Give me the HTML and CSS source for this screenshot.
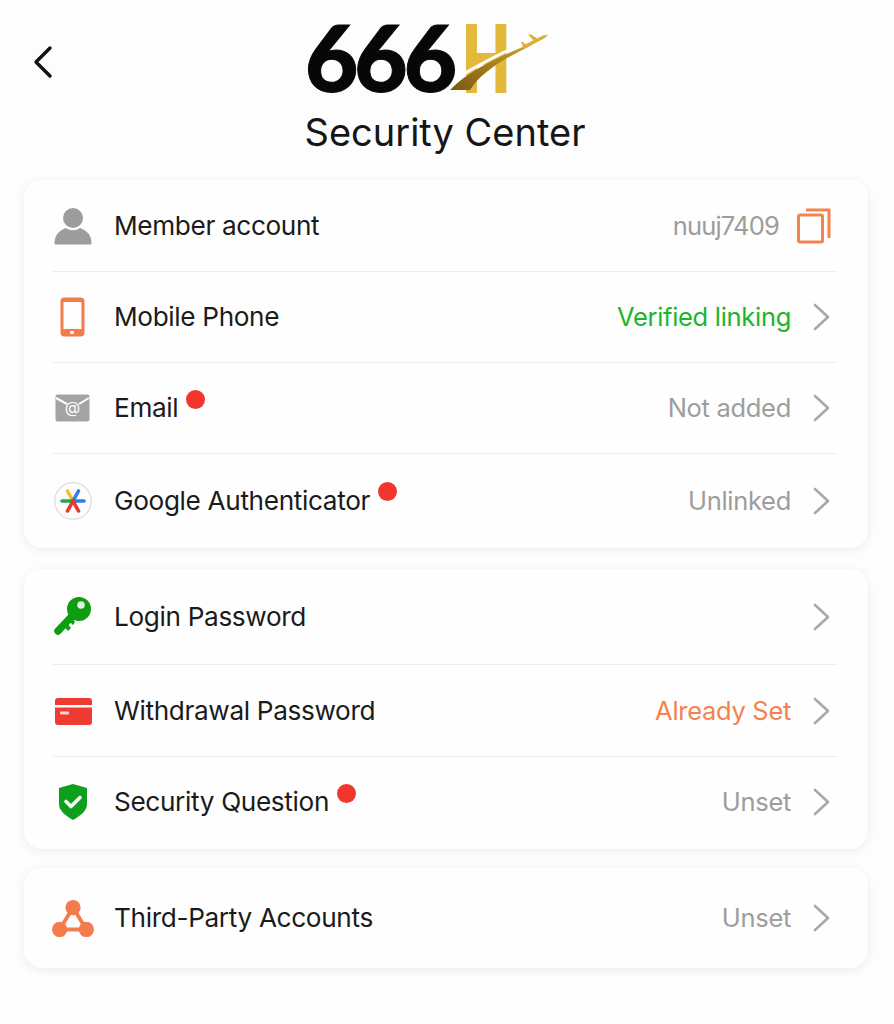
FILE: index.html
```html
<!DOCTYPE html>
<html lang="en">
  <head>
    <meta charset="UTF-8" />
    <meta name="viewport" content="width=device-width, initial-scale=1.0" />
    <title>Security Center</title>
    <link rel="stylesheet" href="styles.css">
  </head>
  <body>
    <header class="header">
      <div class="topbar">
        <svg class="back" width="22" height="34" viewBox="0 0 22 34"><path d="M18 3 L4 17 L18 31" fill="none" stroke="#111" stroke-width="3.4" stroke-linecap="round" stroke-linejoin="round"/></svg>
        <div class="logo">
          <span class="logo-num">666</span><span class="logo-h">H</span>
          <svg class="logo-plane" width="110" height="70" viewBox="0 0 110 70">
            <defs>
              <linearGradient id="swoosh" x1="0" y1="1" x2="1" y2="0">
                <stop offset="0" stop-color="#7a5a12"/>
                <stop offset="0.45" stop-color="#a67f1e"/>
                <stop offset="1" stop-color="#dcb038"/>
              </linearGradient>
            </defs>
            <path d="M14 53 C35 39 58 29 80 18" fill="none" stroke="#fdfdfd" stroke-width="3"/>
            <path d="M5 66 C20 50 45 37 66 28 C80 22 92 17 103 11 C90 20 75 27 62 34 C47 43 34 52 25 66 Z" fill="url(#swoosh)"/>
            <path d="M77 22 L98 11.500 L103 10.500 L100 14 L80 24 Z M83 10.500 L86 10.500 L93 15 L89 17 Z M76 18 L78 18 L83 23 L79 25 Z" fill="#dcb038"/>
          </svg>
        </div>
      </div>
      <h1 class="title">Security Center</h1>
    </header>

    <main class="list">
      <section class="card">
        <div class="row row-first">
          <div class="icon">
            <svg width="38" height="38" viewBox="0 0 38 38"><circle cx="19" cy="11" r="10" fill="#9c9c9c"/><path d="M1 37 C1 28 5 24 12 21.500 C16 24.500 22 24.500 26 21.500 C33 24 37 28 37 37 Z" fill="#9c9c9c" stroke="#9c9c9c" stroke-linejoin="round"/></svg>
          </div>
          <span class="label">Member account</span>
          <span class="value value-muted value-id">nuuj7409</span>
          <svg class="copy" width="34" height="36" viewBox="0 0 34 36"><rect x="1.500" y="7" width="24" height="27" rx="1.500" fill="none" stroke="#f3834f" stroke-width="3"/><path d="M9 2 H32 V30" fill="none" stroke="#f3834f" stroke-width="3"/></svg>
        </div>
        <div class="row">
          <div class="icon">
            <svg width="26" height="40" viewBox="0 0 26 40"><rect x="0.500" y="0.500" width="24" height="39" rx="4" fill="#f47c4c"/><rect x="3.500" y="5" width="18" height="27" fill="#fdfdfd"/><rect x="10" y="34" width="4" height="3" rx="1" fill="#fdfdfd"/></svg>
          </div>
          <span class="label">Mobile Phone</span>
          <span class="value value-green">Verified linking</span>
          <svg class="arrow" width="18" height="28" viewBox="0 0 18 28"><path d="M2 2 L15 14 L2 26" fill="none" stroke="#a8a8a8" stroke-width="2.600" stroke-linecap="round" stroke-linejoin="round"/></svg>
        </div>
        <div class="row">
          <div class="icon">
            <svg width="36" height="28" viewBox="0 0 36 28"><rect x="0.500" y="0.500" width="34" height="27" rx="2" fill="#a3a3a3"/><path d="M1 4 L12 10 M34 4 L24 10" stroke="#fdfdfd" stroke-width="2" fill="none"/><text x="17.500" y="19" class="icon-at">@</text></svg>
          </div>
          <span class="label">Email</span>
          <span class="dot"></span>
          <span class="value value-muted">Not added</span>
          <svg class="arrow" width="18" height="28" viewBox="0 0 18 28"><path d="M2 2 L15 14 L2 26" fill="none" stroke="#a8a8a8" stroke-width="2.600" stroke-linecap="round" stroke-linejoin="round"/></svg>
        </div>
        <div class="row row-end">
          <div class="icon">
            <svg width="38" height="38" viewBox="0 0 38 38">
              <circle cx="19" cy="19" r="18.300" fill="#fdfdfd" stroke="#dcdcdc" stroke-width="1.200"/>
              <g fill="none" stroke-width="3.600" stroke-linecap="round">
                <path d="M19 19 L13.500 9" stroke="#f5bf2a"/>
                <path d="M19 19 L24.500 9" stroke="#2f80e4"/>
                <path d="M19 19 L30 19" stroke="#2f80e4"/>
                <path d="M19 19 L8 19" stroke="#1fa84f"/>
                <path d="M19 19 L13.500 29" stroke="#e23a33"/>
                <path d="M19 19 L24.500 29" stroke="#e23a33"/>
              </g>
            </svg>
          </div>
          <span class="label">Google Authenticator</span>
          <span class="dot"></span>
          <span class="value value-muted">Unlinked</span>
          <svg class="arrow" width="18" height="28" viewBox="0 0 18 28"><path d="M2 2 L15 14 L2 26" fill="none" stroke="#a8a8a8" stroke-width="2.600" stroke-linecap="round" stroke-linejoin="round"/></svg>
        </div>
      </section>

      <section class="card card-two">
        <div class="row row-tall">
          <div class="icon">
            <svg width="38" height="40" viewBox="0 0 38 40"><path d="M20 17 L4 34" fill="none" stroke="#0d9c12" stroke-width="7.500" stroke-linecap="round"/><path d="M9 28 L14 34 L17 31 L12 25 Z M14 23 L19 28 L21 25 L17 20 Z" fill="#0d9c12"/><circle cx="25" cy="12" r="12" fill="#0d9c12"/><circle cx="27" cy="8" r="3.800" fill="#e4f4e4"/></svg>
          </div>
          <span class="label">Login Password</span>
          <span class="value"></span>
          <svg class="arrow" width="18" height="28" viewBox="0 0 18 28"><path d="M2 2 L15 14 L2 26" fill="none" stroke="#a8a8a8" stroke-width="2.600" stroke-linecap="round" stroke-linejoin="round"/></svg>
        </div>
        <div class="row row-mid">
          <div class="icon">
            <svg width="37" height="27" viewBox="0 0 37 27"><rect width="37" height="27" rx="3" fill="#ee3c32"/><rect y="7" width="37" height="2.500" fill="#fdfdfd"/><rect x="5" y="13.500" width="9" height="3" rx="1" fill="#fbd6d2"/></svg>
          </div>
          <span class="label">Withdrawal Password</span>
          <span class="value value-orange">Already Set</span>
          <svg class="arrow" width="18" height="28" viewBox="0 0 18 28"><path d="M2 2 L15 14 L2 26" fill="none" stroke="#a8a8a8" stroke-width="2.600" stroke-linecap="round" stroke-linejoin="round"/></svg>
        </div>
        <div class="row row-last">
          <div class="icon">
            <svg width="30" height="36" viewBox="0 0 30 36"><path d="M15 0 L29 4 V20 C29 27 22 32 15 36 C8 32 1 27 1 20 V4 Z" fill="#0ea01c"/><path d="M8 17.500 L13 22.500 L22 13.500" fill="none" stroke="#f4fbf4" stroke-width="3.600" stroke-linecap="round" stroke-linejoin="round"/></svg>
          </div>
          <span class="label">Security Question</span>
          <span class="dot"></span>
          <span class="value value-muted">Unset</span>
          <svg class="arrow" width="18" height="28" viewBox="0 0 18 28"><path d="M2 2 L15 14 L2 26" fill="none" stroke="#a8a8a8" stroke-width="2.600" stroke-linecap="round" stroke-linejoin="round"/></svg>
        </div>
      </section>

      <section class="card card-three">
        <div class="row row-single">
          <div class="icon">
            <svg width="44" height="41" viewBox="0 0 44 41"><path d="M22 9 L8 32 H36 Z" fill="none" stroke="#f47c4c" stroke-width="4"/><circle cx="22" cy="9" r="8" fill="#f47c4c"/><circle cx="8" cy="32" r="8" fill="#f47c4c"/><circle cx="36" cy="32" r="8" fill="#f47c4c"/></svg>
          </div>
          <span class="label">Third-Party Accounts</span>
          <span class="value value-muted">Unset</span>
          <svg class="arrow" width="18" height="28" viewBox="0 0 18 28"><path d="M2 2 L15 14 L2 26" fill="none" stroke="#a8a8a8" stroke-width="2.600" stroke-linecap="round" stroke-linejoin="round"/></svg>
        </div>
      </section>
    </main>
  </body>
</html>
```

FILE: styles.css
```css
* {
  box-sizing: border-box;
}

body {
  margin: 0;
  height: 1024px;
  overflow: hidden;
  background-color: #fdfdfd;
  color: #1b1b1b;
  font-family: Inter, "Liberation Sans", sans-serif;
}

.header {
  height: 180px;
  padding-top: 24px;
}

.topbar {
  display: flex;
  align-items: flex-start;
  height: 66px;
  padding-left: 32px;
}

.back {
  margin-top: 21px;
}

.logo {
  position: relative;
  display: flex;
  align-items: flex-start;
  height: 66px;
  margin-left: 251px;
  line-height: 66px;
  font-family: Lato, sans-serif;
  font-size: 92px;
  font-weight: 900;
}

.logo-num {
  color: #070707;
  letter-spacing: -4px;
  -webkit-text-stroke: 1px #070707;
}

.logo-h {
  margin-left: 9px;
  color: #e2b93b;
  transform: scaleX(0.68);
  transform-origin: left center;
  -webkit-text-stroke: 2px #e2b93b;
}

.logo-plane {
  position: absolute;
  left: 140px;
  top: 0;
}

.title {
  margin: 20px 0 0;
  padding-right: 4px;
  font-size: 38px;
  font-weight: 400;
  line-height: 44px;
  text-align: center;
  color: #161616;
}

.list {
  display: flex;
  flex-direction: column;
  padding: 0 26px 0 24px;
}

.card {
  background-color: #fefefe;
  border-radius: 18px;
  box-shadow: 0 2px 10px rgba(0, 0, 0, 0.07);
}

.card-two {
  margin-top: 21px;
}

.card-three {
  margin-top: 19px;
}

.row {
  display: flex;
  align-items: center;
  height: 91px;
  margin: 0 31px 0 28px;
  border-bottom: 1px solid #eeeeee;
}

.row-first {
  height: 92px;
}

.row-end {
  height: 94px;
  padding-bottom: 1px;
  border-bottom: none;
}

.row-tall {
  height: 96px;
}

.row-mid {
  height: 92px;
  padding-top: 1px;
}

.row-last {
  height: 92px;
  padding-bottom: 2px;
  border-bottom: none;
}

.row-single {
  height: 100px;
  border-bottom: none;
}

.icon {
  display: flex;
  align-items: center;
  justify-content: center;
  width: 42px;
  height: 44px;
  margin-right: 20px;
}

.icon-at {
  font-size: 16px;
  text-anchor: middle;
  fill: #fdfdfd;
}

.label {
  font-size: 26.2px;
  letter-spacing: -0.35px;
  line-height: 36px;
}

.dot {
  width: 19px;
  height: 19px;
  margin: 0 0 18px 8px;
  background-color: #f0362d;
  border-radius: 50%;
}

.value {
  margin-left: auto;
  font-size: 25.5px;
  letter-spacing: -0.3px;
  line-height: 36px;
}

.value-id {
  letter-spacing: -0.8px;
}

.value-muted {
  color: #9d9d9d;
}

.value-green {
  color: #20b42e;
}

.value-orange {
  color: #f4824f;
}

.copy {
  margin: 0 6px 0 18px;
}

.arrow {
  margin: 0 6px 0 22px;
}
```
